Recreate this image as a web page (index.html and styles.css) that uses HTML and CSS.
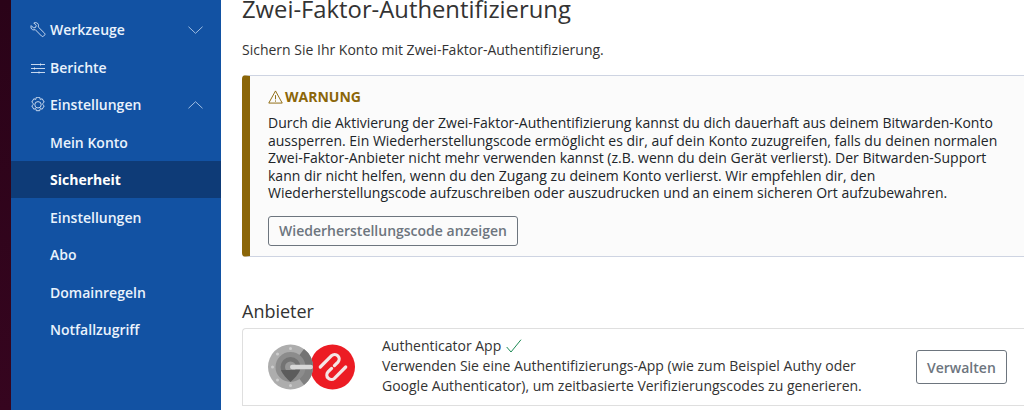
FILE: index.html
```html
<!DOCTYPE html>
<html lang="de">
<head>
<meta charset="utf-8">
<title>Zwei-Faktor-Authentifizierung</title>
<link rel="stylesheet" href="styles.css">
</head>
<body>
<div class="strip"></div>
<nav class="sidebar">
  <a class="item"><svg class="icon" viewBox="0 0 16 16"><path d="M1.200 3.600 3.600 6l2-.6.6-2L3.800 1c2-.8 3.900-.1 4.500 1.400.3.900.2 1.800-.1 2.500l6.300 6.300c.6.600.6 1.500 0 2l-.9.900c-.6.600-1.400.600-2 0L5.200 7.600c-.8.400-1.800.4-2.600.1C1.200 7.100.5 5.300 1.200 3.600Z"/></svg><span>Werkzeuge</span><svg class="chev" viewBox="0 0 16 8"><path d="M.5.500 8 7.500 15.500.5"/></svg></a>
  <a class="item"><svg class="icon" viewBox="0 0 16 16"><path d="M1 5.500h14M1 9.500h14M1 13.500h14M10.500 4.500v2M4.500 8.500v2M9 12.500v2"/></svg><span>Berichte</span></a>
  <a class="item"><svg class="icon" viewBox="0 0 16 16"><path d="M6.300 .3h3.400l.5 2.100 2-.6 2 3.300-1.500 1.400v1l1.500 1.400-2 3.300-2-.6-.5 2.100H6.300l-.5-2.100-2 .6-2-3.300 1.500-1.400v-1L1.800 5.100l2-3.300 2 .6Z"/><circle cx="8" cy="7.800" r="3.200"/></svg><span>Einstellungen</span><svg class="chev" viewBox="0 0 16 8"><path d="M.5 7.500 8 .5l7.500 7"/></svg></a>
  <a class="item sub">Mein Konto</a>
  <a class="item sub active">Sicherheit</a>
  <a class="item sub">Einstellungen</a>
  <a class="item sub">Abo</a>
  <a class="item sub">Domainregeln</a>
  <a class="item sub">Notfallzugriff</a>
</nav>
<main class="main">
  <h1 class="title">Zwei-Faktor-Authentifizierung</h1>
  <p class="lead">Sichern Sie Ihr Konto mit Zwei-Faktor-Authentifizierung.</p>
  <section class="warning">
    <h2 class="warning-head"><svg class="warn-icon" viewBox="0 0 16 15"><path d="M8 1 15.200 14H.8Z"/><path d="M8 5.500v4.500M8 11.200v1.300"/></svg>WARNUNG</h2>
    <p class="warning-text">Durch die Aktivierung der Zwei-Faktor-Authentifizierung kannst du dich dauerhaft aus deinem Bitwarden-Konto aussperren. Ein Wiederherstellungscode ermöglicht es dir, auf dein Konto zuzugreifen, falls du deinen normalen Zwei-Faktor-Anbieter nicht mehr verwenden kannst (z.B. wenn du dein Gerät verlierst). Der Bitwarden-Support kann dir nicht helfen, wenn du den Zugang zu deinem Konto verlierst. Wir empfehlen dir, den Wiederherstellungscode aufzuschreiben oder auszudrucken und an einem sicheren Ort aufzubewahren.</p>
    <button class="btn">Wiederherstellungscode anzeigen</button>
  </section>
  <h2 class="section-title">Anbieter</h2>
  <ul class="providers">
    <li class="provider">
      <svg class="logo" viewBox="0 0 87 46">
        <circle cx="64.500" cy="23" r="22.500" fill="#ec1c24"/>
        <g fill="none" stroke="#f4e6e6" stroke-width="3.200" stroke-linecap="round">
          <path d="M52.280 23 63.590 11.690a4.500 4.500 0 0 1 6.360 6.360L66.410 21.590"/>
          <path d="M77.720 23 66.410 34.310a4.500 4.500 0 0 1-6.360-6.360L63.590 24.410"/>
        </g>
        <circle cx="22.500" cy="23" r="22.500" fill="#adadad"/>
        <path d="M22.500 23 36 5a22.500 22.500 0 0 1 9 18Z" fill="#747474"/>
        <path d="M22.500 23H45a22.500 22.500 0 0 1-9 18Z" fill="#808080"/>
        <circle cx="22.500" cy="23" r="15" fill="#8c8c8c"/>
        <circle cx="22.500" cy="23" r="10" fill="#737373"/>
        <circle cx="22.500" cy="23" r="5.500" fill="#969696"/>
        <path d="M13 26c2 5 6 9 9.500 12 3.500-3 7.500-7 9.500-12Z" fill="#5c5c5c"/>
        <rect x="22" y="20.700" width="23" height="4.600" rx="2.300" fill="#d8d8d8"/>
        <g fill="#cdcdcd"><circle cx="22.500" cy="4.500" r="1.500"/><circle cx="9.500" cy="10" r="1.500"/><circle cx="4.500" cy="23" r="1.500"/><circle cx="9.500" cy="36" r="1.500"/><circle cx="22.500" cy="41.500" r="1.500"/></g>
      </svg>
      <div class="provider-body">
        <div class="provider-name">Authenticator App <svg class="check" viewBox="0 0 16 14"><path d="M.7 8 5 13 15 .7"/></svg></div>
        <div class="provider-desc">Verwenden Sie eine Authentifizierungs-App (wie zum Beispiel Authy oder Google Authenticator), um zeitbasierte Verifizierungscodes zu generieren.</div>
      </div>
      <button class="btn manage">Verwalten</button>
    </li>
  </ul>
</main>
</body>
</html>
```
FILE: styles.css
```css
* { box-sizing: border-box; }
html, body { height: 410px; overflow: hidden; }
body {
  margin: 0;
  display: flex;
  background: #fff;
  font-family: "Open Sans", sans-serif;
  font-size: 14px;
  line-height: 21px;
  color: #212529;
}
.strip {
  width: 11px;
  flex: none;
  background: linear-gradient(#2a0318, #36051f);
}
.sidebar {
  width: 210px;
  flex: none;
  background: #1252a3;
  padding-top: 10.75px;
  color: #fff;
}
.item {
  display: flex;
  align-items: center;
  height: 37.5px;
  padding: 0 18px 0 19px;
  font-weight: 600;
  color: #eaf2fc;
}
.item span { flex: 1; }
.icon {
  width: 16px;
  height: 16px;
  margin-right: 4px;
  fill: none;
  stroke: #dbe7f6;
  stroke-width: .9;
}
.chev {
  width: 15px;
  height: 8px;
  fill: none;
  stroke: #a9c4e6;
  stroke-width: 1;
}
.sub { padding-left: 39px; }
.active { background: #0e3b77; color: #fff; font-weight: 700; }
.main {
  flex: 1;
  min-width: 0;
  padding-left: 21px;
  margin-right: -40px;
}
.title {
  margin: -5px 0 0;
  font-size: 23.800px;
  line-height: 29px;
  font-weight: 400;
  color: #333;
}
.lead { margin: 15px 0 0; color: #333; }
.warning {
  margin-top: 15px;
  height: 182px;
  padding: 10px 0 0 18px;
  background: #fbfbfb;
  border: 1px solid #ced4e2;
  border-left: 8px solid #8b6609;
  border-right: 0;
  border-radius: 4px 0 0 4px;
}
.warning-head {
  display: flex;
  align-items: center;
  margin: 0 0 7px;
  font-size: 14px;
  line-height: 21px;
  font-weight: 700;
  color: #8b6609;
}
.warn-icon {
  width: 15px;
  height: 14px;
  margin-right: 2px;
  fill: none;
  stroke: #8b6609;
  stroke-width: 1;
}
.warning-text {
  margin: 0;
  width: 740px;
  line-height: 17.500px;
  color: #212529;
}
.btn {
  font: 600 14px/21px "Open Sans", sans-serif;
  color: #6d757e;
  background: transparent;
  border: 1px solid #6d757e;
  border-radius: 3px;
  padding: 3px 10px;
}
.warning .btn { margin-top: 14px; height: 30px; }
.section-title {
  margin: 43px 0 0;
  font-size: 18px;
  line-height: 22px;
  font-weight: 400;
  color: #333;
}
.providers {
  list-style: none;
  margin: 6px 0 0;
  padding: 0;
  border: 1px solid #dfdfdf;
  border-right: 0;
  border-bottom: 0;
  border-radius: 4px 0 0 0;
}
.provider {
  display: flex;
  align-items: center;
  height: 77px;
  padding-left: 25px;
  border-bottom: 1px solid #dfdfdf;
}
.logo { width: 87px; height: 46px; flex: none; }
.provider-body { width: 500px; margin: 0 0 2px 27px; color: #333; line-height: 20px; }
.provider-name { display: flex; align-items: center; gap: 5px; }
.check {
  width: 16px;
  height: 14px;
  fill: none;
  stroke: #1d8a55;
  stroke-width: 1;
}
.manage { margin-left: 34px; height: 34px; }
```
